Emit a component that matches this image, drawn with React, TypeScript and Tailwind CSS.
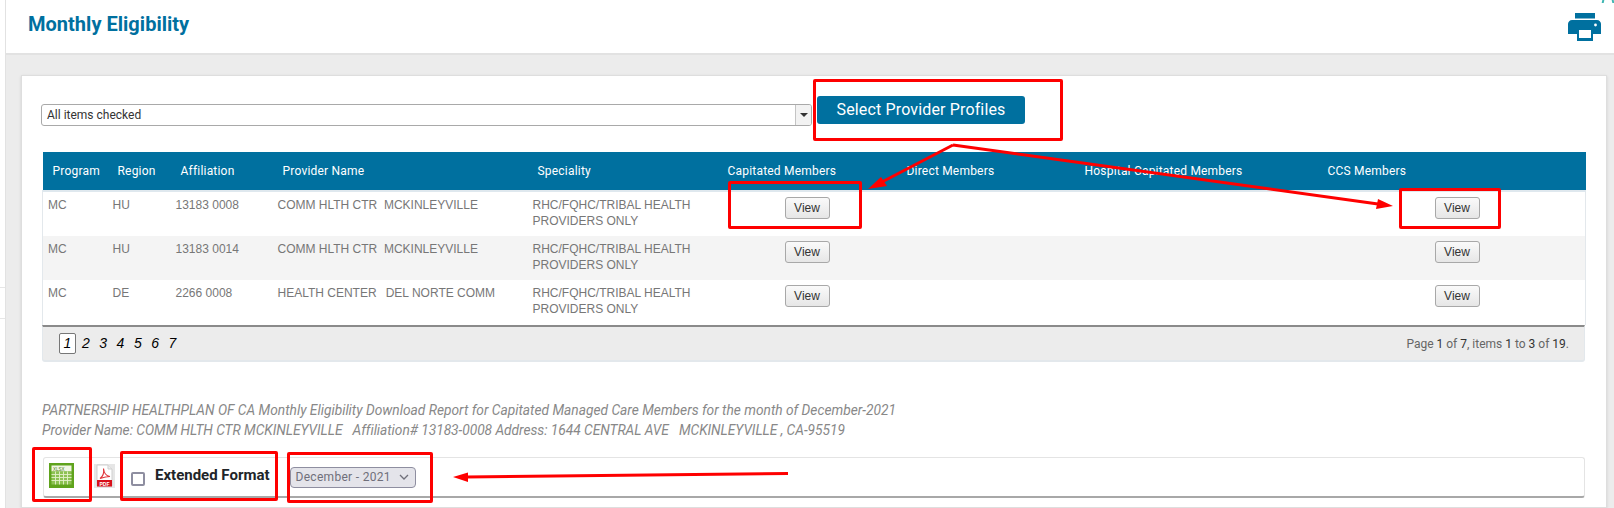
const ROWS = [
  { program: "MC", region: "HU", affiliation: "13183 0008", name: "COMM HLTH CTR\u00a0\u00a0MCKINLEYVILLE" },
  { program: "MC", region: "HU", affiliation: "13183 0014", name: "COMM HLTH CTR\u00a0\u00a0MCKINLEYVILLE" },
  { program: "MC", region: "DE", affiliation: "2266 0008", name: "HEALTH CENTER\u00a0\u00a0\u2009DEL NORTE COMM" },
];

const COLUMNS = [
  { label: "Program", width: "w-[65px]" },
  { label: "Region", width: "w-[63px]" },
  { label: "Affiliation", width: "w-[102px]" },
  { label: "Provider Name", width: "w-[255px]" },
  { label: "Speciality", width: "w-[190px]" },
  { label: "Capitated Members", width: "w-[179px]" },
  { label: "Direct Members", width: "w-[178px]" },
  { label: "Hospital Capitated Members", width: "w-[243px]" },
  { label: "CCS Members", width: "w-[268px]" },
];

function ViewButton() {
  return (
    <button className="h-[22px] w-[45px] rounded-[3px] border border-[#a8a8a8] bg-gradient-to-b from-[#fafafa] to-[#e6e6e6] font-['Liberation_Sans',sans-serif] text-[12px] leading-none text-[#333]">
      View
    </button>
  );
}

function XlsxIcon() {
  return (
    <svg width="25" height="25" viewBox="0 0 25 25" className="mb-[4px] shrink-0">
      <rect width="25" height="25" fill="#5fa31c" />
      <rect x="2.500" y="2.500" width="20" height="6" fill="#f1f6e4" />
      <rect x="2.500" y="8.500" width="20" height="13" fill="#8cc152" />
      <path
        d="M2.500 11.500H22.500M2.500 14.500H22.500M2.500 17.500H22.500M6.500 8.500V21.500M10.500 8.500V21.500M14.500 8.500V21.500M18.500 8.500V21.500"
        stroke="#e3efc9"
        strokeWidth="0.9"
      />
      <text x="4" y="7.500" fontSize="4.500" fontFamily="Liberation Sans, sans-serif" fill="#4a7d14">XLSX</text>
    </svg>
  );
}

function PdfIcon() {
  return (
    <svg width="21" height="24" viewBox="0 0 21 24" className="mb-[3px] shrink-0">
      <rect width="21" height="24" fill="#e6e6e6" />
      <path d="M3 1H14L18 5V22H3Z" fill="#fff" stroke="#cfcfcf" />
      <path d="M14 1V5H18" fill="#eee" stroke="#cfcfcf" />
      <path d="M6 14.500C9 12.500 10 8 9.500 4.500C10 9 12 12 16 12.500C12 12.500 9 13.500 6 14.500Z" fill="none" stroke="#e0343a" strokeWidth="1.100" />
      <rect x="3" y="16" width="15" height="6.500" fill="#d8101a" />
      <text x="5.500" y="21.500" fontSize="5" fontWeight="700" fontFamily="Liberation Sans, sans-serif" fill="#fff">PDF</text>
    </svg>
  );
}

function PrintIcon() {
  return (
    <svg width="33" height="28" viewBox="0 0 33 28">
      <rect x="7" y="0" width="20" height="5.500" fill="#00709f" />
      <path d="M4 7H29C31.200 7 33 8.800 33 11V21H0V11C0 8.800 1.800 7 4 7Z" fill="#00709f" />
      <rect x="9" y="16" width="16" height="12" fill="#00709f" />
      <rect x="11" y="17" width="12" height="8" fill="#fff" />
      <circle cx="27.500" cy="12" r="1.400" fill="#fff" />
    </svg>
  );
}

function Annotations() {
  const boxes = [
    "left-[813px] top-[79px] w-[250px] h-[62px]",
    "left-[728px] top-[181px] w-[134px] h-[48px]",
    "left-[1399px] top-[188px] w-[102px] h-[41px]",
    "left-[32px] top-[447px] w-[60px] h-[55px]",
    "left-[120px] top-[451px] w-[158px] h-[50px]",
    "left-[287px] top-[452px] w-[146px] h-[51px]",
  ];
  return (
    <>
      {boxes.map((b) => (
        <div key={b} className={`absolute rounded-[2px] border-[3px] border-[#fe0000] ${b}`} />
      ))}
      <svg className="absolute left-0 top-0 pointer-events-none" width="1614" height="508">
        <g stroke="#fe0000" strokeWidth="3" fill="none">
          <path d="M953 145L880 183" />
          <path d="M953 145L1378 204" />
          <path d="M466 477L788 473.500" />
        </g>
        <g fill="#fe0000">
          <path d="M868 189L881 177L887 186Z" />
          <path d="M1393 206L1378 199L1376 209Z" />
          <path d="M453 477L468 472.500L468 482Z" />
        </g>
      </svg>
      {/* stray bits of the page behind, at the screenshot's edges */}
      <div className="absolute left-0 top-[287px] h-px w-[5px] bg-[#e6e6e6]" />
      <div className="absolute left-0 top-[318px] h-px w-[5px] bg-[#e6e6e6]" />
      <div className="absolute left-[1602px] top-0 h-[3px] w-[2px] -skew-x-12 bg-[#3fb6b2]" />
      <div className="absolute left-[1612px] top-0 h-[3px] w-[2px] skew-x-12 bg-[#3fb6b2]" />
    </>
  );
}

export default function App() {
  return (
    <div className="relative h-[508px] w-[1614px] overflow-hidden bg-white font-['Roboto',sans-serif]">
      <div className="ml-[5px] flex h-full flex-col border-l border-[#e2e2e2] bg-[#ececec]">
        <header className="flex h-[55px] shrink-0 items-center justify-between border-b-2 border-[#e2e2e2] bg-white pl-[22px] pr-[13px]">
          <h1 className="pb-[5px] text-[20px] font-bold leading-none tracking-[0.02px] text-[#00709f]">Monthly Eligibility</h1>
          <PrintIcon />
        </header>

        <main className="ml-[15px] mr-[7px] mt-[20px] flex-1 border border-[#dedede] bg-white pl-[19px] pr-[21px] shadow-sm">
          <div className="mt-[20px] flex items-start">
            <div className="mt-[8px] flex h-[22px] w-[771px] overflow-hidden rounded-[3px] border border-[#a9a9a9] bg-white">
              <span className="flex-1 pl-[5px] text-[12px] leading-[21px] text-[#333]">All items checked</span>
              <span className="flex w-[16px] items-center justify-center border-l border-[#c4c4c4] bg-[#f2f2f2]">
                <span className="border-x-[4px] border-t-[4px] border-x-transparent border-t-[#333]" />
              </span>
            </div>
            <button className="ml-[5px] h-[28px] w-[208px] rounded-[3px] bg-[#00709f] text-[16px] font-normal tracking-[0.15px] text-white">
              Select Provider Profiles
            </button>
          </div>

          <div className="ml-[1px] mt-[26px] w-[1543px]">
            <table className="w-full table-fixed border-collapse text-[12px]">
              <thead>
                <tr className="h-[39px] border-b-2 border-[#dfe8ee] bg-[#00709f] text-white">
                  {COLUMNS.map((c) => (
                    <th key={c.label} className={`${c.width} pl-[10px] text-left font-normal tracking-[0.2px]`}>
                      {c.label}
                    </th>
                  ))}
                </tr>
              </thead>
              <tbody className="font-['Liberation_Sans',sans-serif] leading-[16px] text-[#777]">
                {ROWS.map((r, i) => (
                  <tr key={r.affiliation} className={`align-top ${i === 1 ? "h-[44px] bg-[#f4f4f4]" : "h-[45px] bg-white"}`}>
                    <td className="border-l border-[#e3e8ec] pl-[5px] pt-[5px]">{r.program}</td>
                    <td className="pl-[5px] pt-[5px]">{r.region}</td>
                    <td className="pl-[5px] pt-[5px]">{r.affiliation}</td>
                    <td className="pl-[5px] pt-[5px] whitespace-nowrap">{r.name}</td>
                    <td className="pl-[5px] pt-[5px]">RHC/FQHC/TRIBAL HEALTH PROVIDERS ONLY</td>
                    <td className="pt-[5px] pl-[67px]"><ViewButton /></td>
                    <td />
                    <td />
                    <td className="border-r border-[#e3e8ec] pt-[5px] pl-[117px]"><ViewButton /></td>
                  </tr>
                ))}
              </tbody>
            </table>
            <div className="flex h-[37px] items-center justify-between rounded-b-[3px] border-x border-b-2 border-t-2 border-x-[#e3e8ec] border-b-[#e3e8ec] border-t-[#8a8a8a] bg-[#ececec] pl-[16px] pr-[15px]">
              <div className="flex items-center font-['Liberation_Sans',sans-serif] text-[14px] italic text-black">
                <span className="flex h-[21px] w-[17px] items-center justify-center rounded-[2px] border border-[#777] bg-white">1</span>
                {[2, 3, 4, 5, 6, 7].map((n) => (
                  <span key={n} className={n === 2 ? "ml-[6px]" : "ml-[9.500px]"}>{n}</span>
                ))}
              </div>
              <span className="text-[12px] text-[#666]">
                Page <span className="text-[#333]">1</span> of <span className="text-[#333]">7</span>, items <span className="text-[#333]">1</span> to <span className="text-[#333]">3</span> of <span className="text-[#333]">19</span>.
              </span>
            </div>
          </div>

          <div className="ml-[1px] mt-[39px] text-[13.750px] italic leading-[19.500px] text-[#888]">
            <p>PARTNERSHIP HEALTHPLAN OF CA Monthly Eligibility Download Report for Capitated Managed Care Members for the month of December-2021</p>
            <p className="whitespace-pre tracking-[-0.03px]">Provider Name: COMM HLTH CTR MCKINLEYVILLE   Affiliation# 13183-0008 Address: 1644 CENTRAL AVE   MCKINLEYVILLE , CA-95519</p>
          </div>

          <div className="ml-[2px] mt-[17px] flex h-[41px] w-[1542px] items-center rounded-[3px] border border-[#e4e4e4] border-b-2 border-b-[#a8a8a8] pl-[5px]">
            <XlsxIcon />
            <span className="ml-[20px] flex"><PdfIcon /></span>
            <span className="ml-[16px] mt-[3px] h-[14px] w-[14px] shrink-0 rounded-[2px] border-2 border-[#8e8ea0] bg-white" />
            <span className="mb-[3px] ml-[10px] text-[15px] font-bold text-[#212529]">Extended Format</span>
            <div className="ml-[20px] flex h-[21px] w-[126px] items-center justify-between rounded-[4px] border border-[#8e8ea0] bg-[#e4e4ea] pl-[5px] pr-[6px] text-[12px] tracking-[0.3px] text-[#6f6f7a]">
              December - 2021
              <svg width="10" height="6" viewBox="0 0 10 6" fill="none" stroke="#6f6f7a" strokeWidth="1.3"><path d="M1 1L5 5L9 1" /></svg>
            </div>
          </div>
        </main>
      </div>
      <Annotations />
    </div>
  );
}
